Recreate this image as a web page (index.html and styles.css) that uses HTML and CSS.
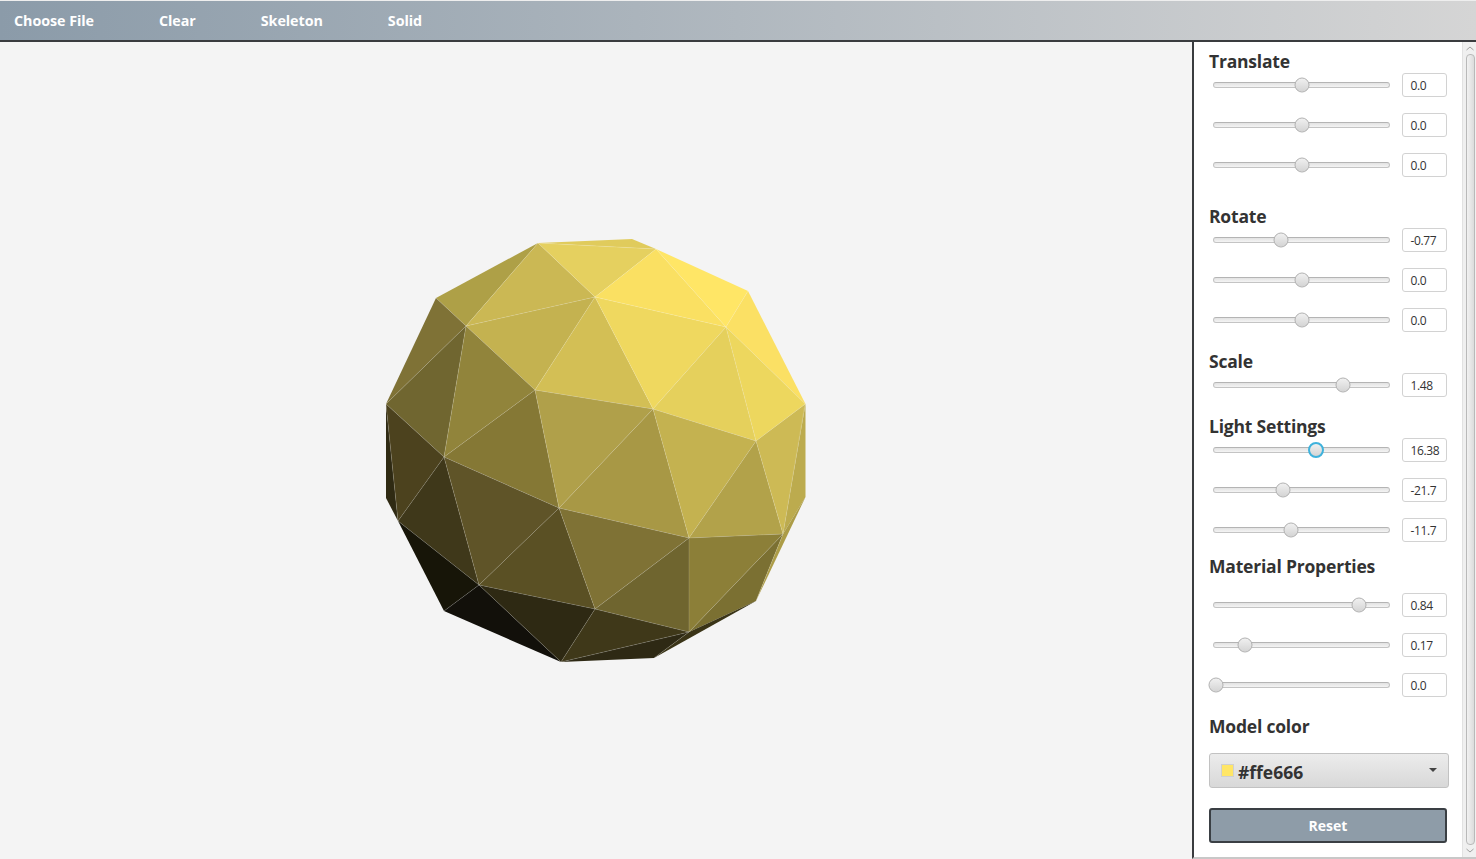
FILE: index.html
```html
<!DOCTYPE html>
<html lang="en">
<head>
    <meta charset="UTF-8">
    <meta name="viewport" content="width=device-width, initial-scale=1.0">
    <title>Model Viewer</title>
    <link rel="stylesheet" href="styles.css">
</head>
<body>
    <div class="toolbar">
        <button class="tool-btn">Choose File</button>
        <button class="tool-btn">Clear</button>
        <button class="tool-btn">Skeleton</button>
        <button class="tool-btn">Solid</button>
    </div>

    <div class="main">
        <div class="viewport">
            <svg class="model" width="1192" height="817" viewBox="0 42 1192 817">
                <g class="faces">
                    <polygon fill="#e0cb5c" points="538,243 632,239 656,249"/>
                    <polygon fill="#aea047" points="436,298 538,243 466,326"/>
                    <polygon fill="#cbb854" points="538,243 595,297 466,326"/>
                    <polygon fill="#e5d05f" points="538,243 656,249 595,297"/>
                    <polygon fill="#c4b250" points="466,326 595,297 535,390"/>
                    <polygon fill="#d3bf55" points="595,297 653,409 535,390"/>
                    <polygon fill="#efd85f" points="595,297 726,327 653,409"/>
                    <polygon fill="#fae062" points="595,297 656,249 726,327"/>
                    <polygon fill="#ffe666" points="656,249 748,291 726,327"/>
                    <polygon fill="#fbe064" points="748,291 805.5,404 726,327"/>
                    <polygon fill="#edd75e" points="726,327 805.5,404 756,441"/>
                    <polygon fill="#e5d05c" points="726,327 756,441 653,409"/>
                    <polygon fill="#7f7236" points="436,298 466,326 386,404"/>
                    <polygon fill="#706630" points="466,326 444,457 386,404"/>
                    <polygon fill="#91843b" points="466,326 535,390 444,457"/>
                    <polygon fill="#857835" points="535,390 559,508 444,457"/>
                    <polygon fill="#b0a04a" points="535,390 653,409 559,508"/>
                    <polygon fill="#a89845" points="653,409 689,538 559,508"/>
                    <polygon fill="#c4b250" points="653,409 756,441 689,538"/>
                    <polygon fill="#b2a24a" points="756,441 783,534 689,538"/>
                    <polygon fill="#cdba55" points="756,441 805.5,404 783,534"/>
                    <polygon fill="#bcab4e" points="805.5,404 805.5,497 783,534"/>
                    <polygon fill="#2f2a13" points="386,404 398,521 386,498"/>
                    <polygon fill="#4c421e" points="386,404 444,457 398,521"/>
                    <polygon fill="#3f381a" points="444,457 479,585 398,521"/>
                    <polygon fill="#5f5428" points="444,457 559,508 479,585"/>
                    <polygon fill="#5a5024" points="559,508 595,609 479,585"/>
                    <polygon fill="#7f7235" points="559,508 689,538 595,609"/>
                    <polygon fill="#6f652f" points="689,538 689,632 595,609"/>
                    <polygon fill="#8c7f38" points="689,538 783,534 689,632"/>
                    <polygon fill="#7b7032" points="783,534 756,601 689,632"/>
                    <polygon fill="#ac9c47" points="783,534 805.5,497 756,601"/>
                    <polygon fill="#171508" points="398,521 479,585 444,611"/>
                    <polygon fill="#12100a" points="479,585 561,662 444,611"/>
                    <polygon fill="#2e2913" points="479,585 595,609 561,662"/>
                    <polygon fill="#3f3819" points="595,609 689,632 561,662"/>
                    <polygon fill="#2e2914" points="689,632 654,658 561,662"/>
                    <polygon fill="#3a3417" points="689,632 756,601 654,658"/>
                </g>
                <!-- inner edges only, the outline stays clean -->
                <path class="edges" d="M538,243 L656,249 M538,243 L466,326 M538,243 L595,297 M466,326 L595,297 M656,249 L595,297 M656,249 L726,327 M748,291 L726,327 M805,404 L726,327 M595,297 L726,327 M595,297 L535,390 M595,297 L653,409 M726,327 L653,409 M726,327 L756,441 M466,326 L535,390 M436,298 L466,326 M386,404 L466,326 M466,326 L444,457 M535,390 L653,409 M653,409 L756,441 M805,404 L756,441 M386,404 L444,457 M535,390 L444,457 M535,390 L559,508 M653,409 L559,508 M653,409 L689,538 M756,441 L689,538 M756,441 L783,534 M805,404 L783,534 M444,457 L398,521 M444,457 L559,508 M444,457 L479,585 M559,508 L479,585 M559,508 L689,538 M559,508 L595,609 M689,538 L783,534 M689,538 L595,609 M689,538 L689,632 M783,534 L689,632 M386,404 L398,521 M398,521 L479,585 M479,585 L595,609 M595,609 L689,632 M479,585 L444,611 M479,585 L561,662 M595,609 L561,662 M689,632 L561,662 M689,632 L654,658 M783,534 L756,601"/>
            </svg>
        </div>

        <div class="side">
            <div class="panel">
                <div class="group">
                    <h3>Translate</h3>
                    <div class="row"><div class="track"><span class="thumb" style="left: 50%"></span></div><div class="value">0.0</div></div>
                    <div class="row"><div class="track"><span class="thumb" style="left: 50%"></span></div><div class="value">0.0</div></div>
                    <div class="row"><div class="track"><span class="thumb" style="left: 50%"></span></div><div class="value">0.0</div></div>
                </div>

                <div class="group rotate">
                    <h3>Rotate</h3>
                    <div class="row"><div class="track"><span class="thumb" style="left: 38%"></span></div><div class="value">-0.77</div></div>
                    <div class="row"><div class="track"><span class="thumb" style="left: 50%"></span></div><div class="value">0.0</div></div>
                    <div class="row"><div class="track"><span class="thumb" style="left: 50%"></span></div><div class="value">0.0</div></div>
                </div>

                <div class="group">
                    <h3>Scale</h3>
                    <div class="row"><div class="track"><span class="thumb" style="left: 73.5%"></span></div><div class="value">1.48</div></div>
                </div>

                <div class="group">
                    <h3>Light Settings</h3>
                    <div class="row"><div class="track"><span class="thumb focused" style="left: 58%"></span></div><div class="value">16.38</div></div>
                    <div class="row"><div class="track"><span class="thumb" style="left: 39.5%"></span></div><div class="value">-21.7</div></div>
                    <div class="row"><div class="track"><span class="thumb" style="left: 44%"></span></div><div class="value">-11.7</div></div>
                </div>

                <div class="group material">
                    <h3>Material Properties</h3>
                    <div class="row"><div class="track"><span class="thumb" style="left: 83%"></span></div><div class="value">0.84</div></div>
                    <div class="row"><div class="track"><span class="thumb" style="left: 17.8%"></span></div><div class="value">0.17</div></div>
                    <div class="row"><div class="track"><span class="thumb" style="left: 1.3%"></span></div><div class="value">0.0</div></div>
                </div>

                <div class="group">
                    <h3>Model color</h3>
                    <div class="color-picker">
                        <span class="swatch"></span>
                        <span class="color-name">#ffe666</span>
                        <span class="arrow"></span>
                    </div>
                    <button class="reset-btn">Reset</button>
                </div>
            </div>

            <div class="scrollbar">
                <svg width="14" height="12" viewBox="0 0 14 12"><path class="chev" d="M3.5 8 L7 5 L10.5 8"/></svg>
                <div class="scroll-thumb"></div>
                <svg width="14" height="12" viewBox="0 0 14 12"><path class="chev" d="M3.5 4 L7 7 L10.5 4"/></svg>
            </div>
        </div>
    </div>
</body>
</html>
```

FILE: styles.css
```css
* {
    margin: 0;
    padding: 0;
    box-sizing: border-box;
}
body {
    width: 1476px;
    height: 859px;
    overflow: hidden;
    display: flex;
    flex-direction: column;
    background: #f4f4f4;
    color: #333;
    font-family: "Open Sans", Arial, sans-serif;
}
.toolbar {
    height: 42px;
    flex: none;
    display: flex;
    align-items: center;
    gap: 65px;
    padding: 0 14px;
    border-top: 1px solid #eee;
    border-bottom: 2px solid #3a3c3f;
    background: linear-gradient(to right, #8b9ba9, #d5d5d5);
}
.tool-btn {
    border: none;
    background: none;
    color: white;
    font-family: inherit;
    font-size: 14.3px;
    font-weight: 700;
    letter-spacing: -0.05px;
}
.main {
    flex: 1;
    display: flex;
    min-height: 0;
}
.viewport {
    width: 1192px;
    flex: none;
    background: #f4f4f4;
}
.model {
    display: block;
}
.edges {
    fill: none;
    stroke: rgba(255, 255, 255, 0.24);
    stroke-width: 0.6;
}
.side {
    flex: 1;
    display: flex;
    background: white;
    border-left: 2px solid #3a3c3f;
    border-bottom: 2px solid #c8c8c8;
}
.panel {
    width: 268px;
    flex: none;
    padding: 10px 15px 0 15px;
}
.group {
    margin-bottom: 20px;
}
.group.rotate {
    margin-top: 30px;
}
.group h3 {
    height: 20px;
    line-height: 18px;
    margin-bottom: 1px;
    font-size: 17.5px;
    font-weight: 700;
    letter-spacing: -0.2px;
    color: #333;
}
.group.material {
    margin-top: -5px;
}
.group.material h3 {
    margin-bottom: 16px;
}
.row {
    height: 24px;
    display: flex;
    align-items: center;
    justify-content: space-between;
    padding-left: 4px;
    margin-bottom: 16px;
}
.row:last-child {
    margin-bottom: 0;
}
.track {
    position: relative;
    width: 177px;
    height: 6px;
    border-radius: 3px;
    border: 1px solid #c4c4c4;
    border-top-color: #b4b4b4;
    background: linear-gradient(#e2e2e2, #f4f4f4);
}
.thumb {
    position: absolute;
    top: 50%;
    width: 15px;
    height: 15px;
    transform: translate(-50%, -50%);
    border-radius: 50%;
    border: 1px solid #b0b0b0;
    background: linear-gradient(#f0f0f0, #d4d4d4);
}
.thumb.focused {
    width: 16px;
    height: 16px;
    border: 2px solid #3fb2dc;
}
.value {
    width: 45px;
    height: 24px;
    line-height: 24px;
    padding-left: 7.5px;
    border: 1px solid #d2d2d2;
    border-radius: 3px;
    background: white;
    font-size: 12px;
    color: #333;
    letter-spacing: -0.4px;
}
.color-picker {
    width: 240px;
    height: 35px;
    margin-top: 16px;
    display: flex;
    align-items: center;
    padding: 0 11px;
    border: 1px solid #c2c2c2;
    border-radius: 3px;
    background: linear-gradient(#ececec, #d8d8d8);
}
.swatch {
    width: 13px;
    height: 13px;
    margin-top: -1px;
    background: #ffe666;
    border: 1px solid #cfcfcf;
}
.color-name {
    margin-left: 4px;
    margin-top: 3px;
    font-size: 17.5px;
    font-weight: 700;
    color: #333;
}
.arrow {
    margin-left: auto;
    margin-top: -2px;
    border-left: 4px solid transparent;
    border-right: 4px solid transparent;
    border-top: 4px solid #444;
}
.reset-btn {
    display: block;
    width: 238px;
    height: 35px;
    margin-top: 20px;
    border: 2px solid #3a3f44;
    border-radius: 3px;
    background: #8e9ca8;
    color: white;
    font-family: inherit;
    font-size: 14px;
    font-weight: 700;
}
.scrollbar {
    flex: 1;
    display: flex;
    flex-direction: column;
    align-items: center;
    background: #f0f0f0;
    border-left: 1px solid #e2e2e2;
}
.scroll-thumb {
    flex: 1;
    width: 9px;
    border: 1px solid #b9b9b9;
    border-radius: 4px;
    background: linear-gradient(to right, #f2f2f2, #dcdcdc);
}
.chev {
    fill: none;
    stroke: #a0a0a0;
    stroke-width: 1;
}
```
